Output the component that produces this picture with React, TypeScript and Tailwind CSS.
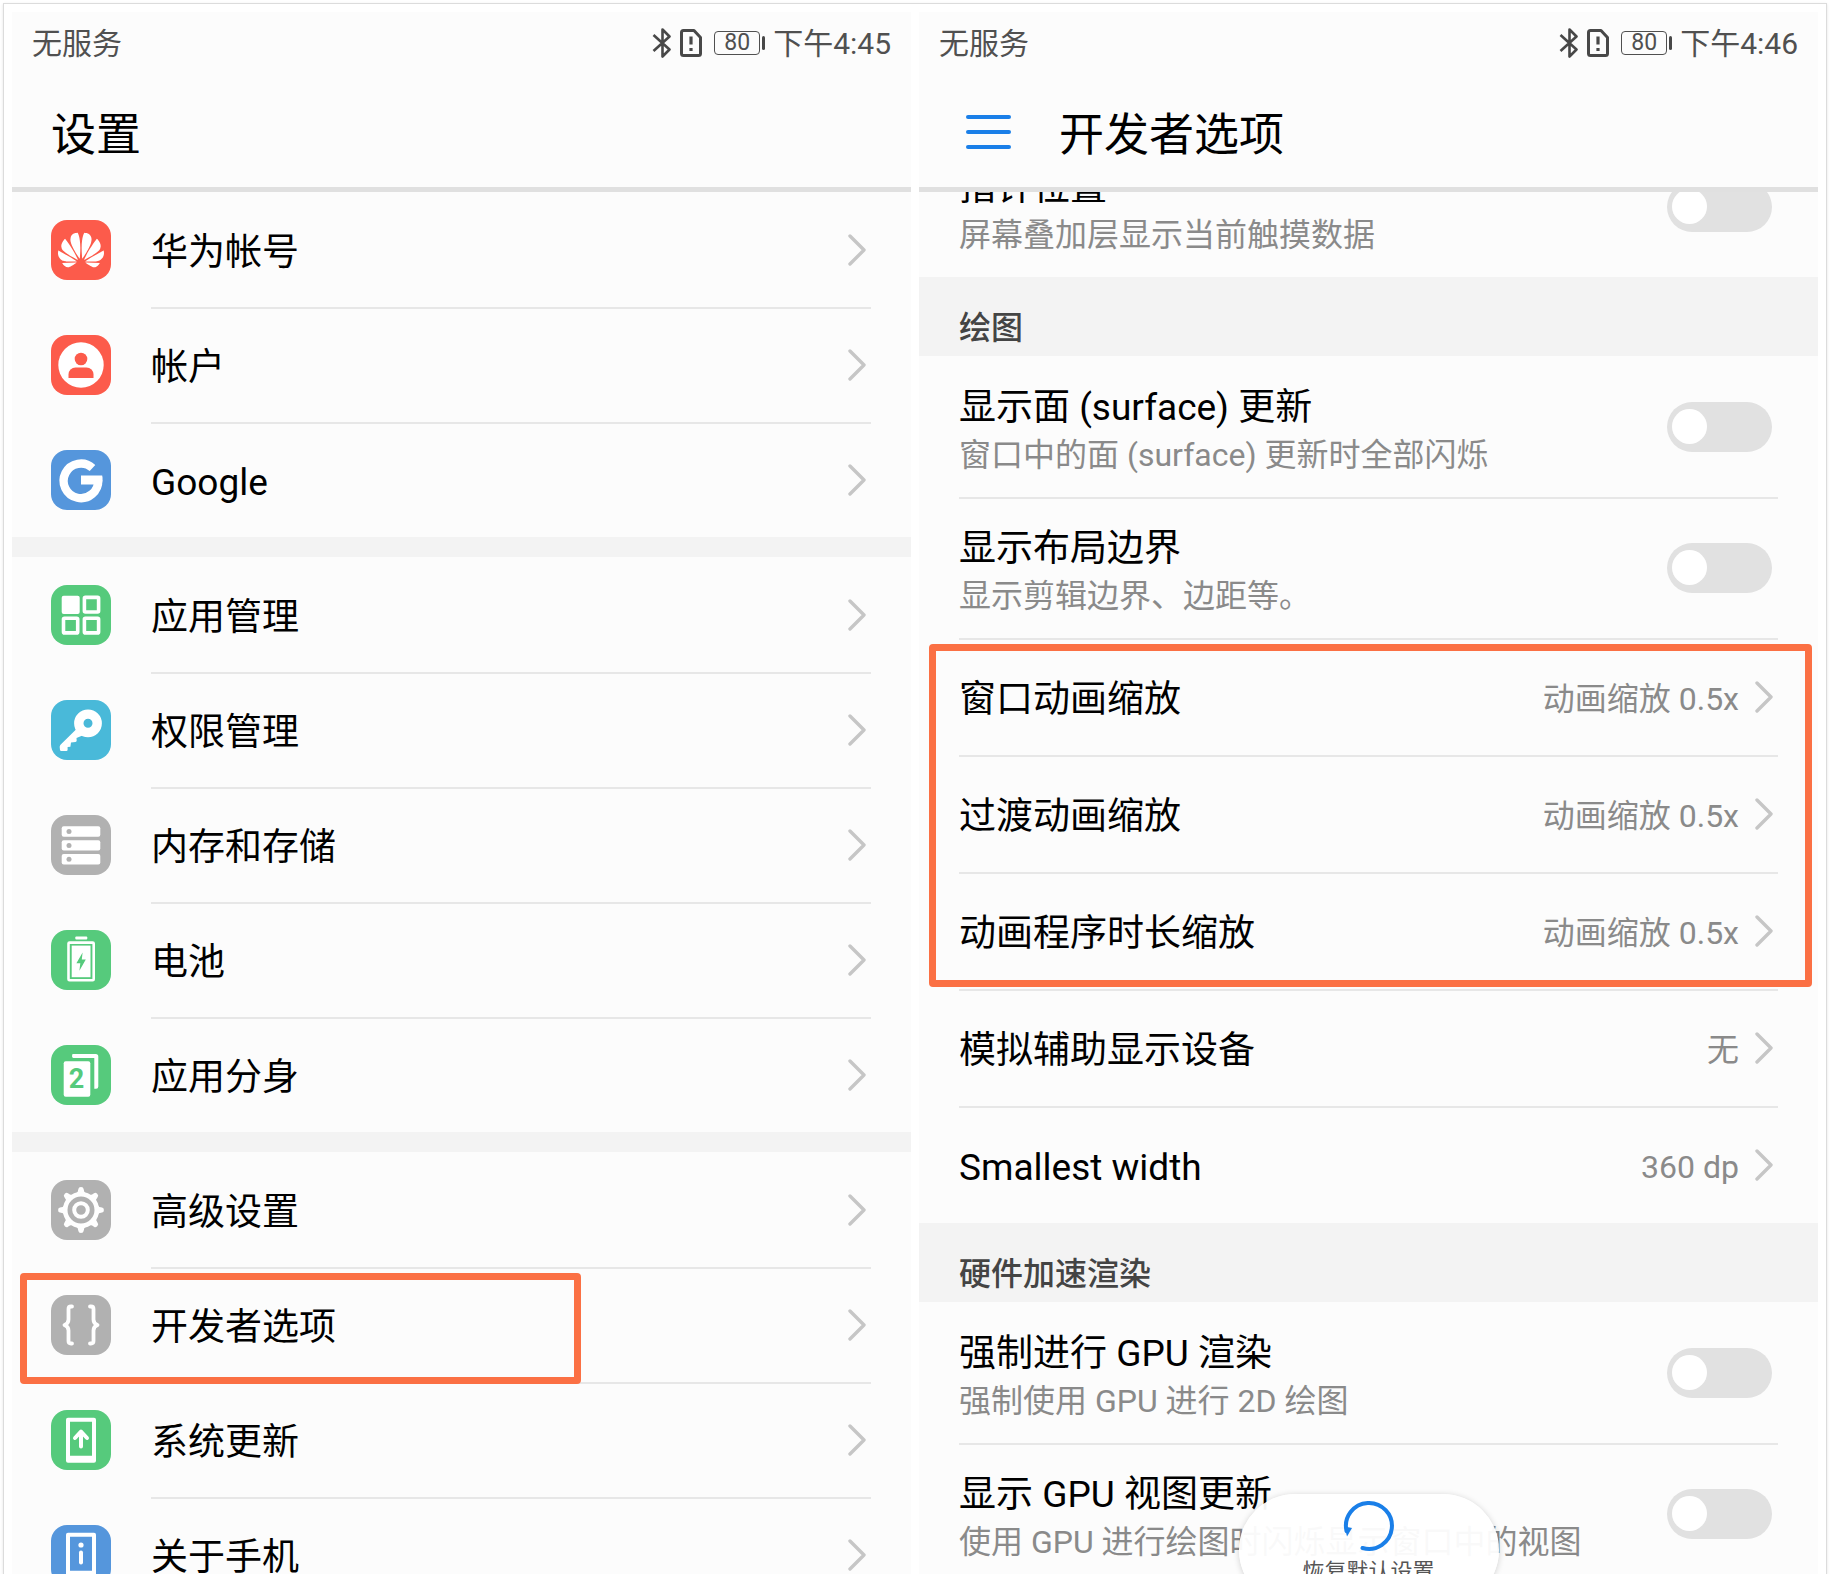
import { ReactNode } from 'react';
import { SiHuawei } from 'react-icons/si';

type Entry = { label: string; icon: ReactNode; marked?: boolean };

function Tile({ className, children }: { className: string; children: ReactNode }) {
  return (
    <span className={`size-[60px] shrink-0 overflow-hidden rounded-2xl text-white ${className}`}>
      <svg viewBox="0 0 60 60" className="size-full" fill="currentColor" aria-hidden="true">
        {children}
      </svg>
    </span>
  );
}

const red = 'bg-[#fc5b4b]';
const blue = 'bg-[#5596dc]';
const green = 'bg-[#56ca7c]';
const cyan = 'bg-[#49b9d9]';
const gray = 'bg-[#b1b1b1]';

const accountEntries: Entry[] = [
  {
    label: '华为帐号',
    icon: (
      <Tile className={red}>
        <SiHuawei x="7" y="7" size={46} />
      </Tile>
    ),
  },
  {
    label: '帐户',
    icon: (
      <Tile className={red}>
        <circle cx="30" cy="30" r="22.7" />
        <circle cx="30" cy="24" r="6.3" fill="#fc5b4b" />
        <path d="M17.5 43v-3.5a7 7 0 0 1 7-7h11a7 7 0 0 1 7 7V43Z" fill="#fc5b4b" />
      </Tile>
    ),
  },
  {
    label: 'Google',
    icon: (
      <Tile className={blue}>
        <path d="M41.5 18A17.3 17.3 0 1 0 47.2 30" fill="none" stroke="currentColor" strokeWidth="8.4" />
        <path d="M30 25.6h21.2q.5 2.2.3 4.4l-.6 4.6H30Z" />
      </Tile>
    ),
  },
];

const systemEntries: Entry[] = [
  {
    label: '应用管理',
    icon: (
      <Tile className={green}>
        <rect x="10.7" y="10.7" width="18" height="18.3" rx="2" />
        <g fill="none" stroke="currentColor" strokeWidth="3.6">
          <rect x="33.4" y="12.4" width="14.2" height="14.6" rx="1" />
          <rect x="12.5" y="33.3" width="14.2" height="14.6" rx="1" />
          <rect x="33.4" y="33.3" width="14.2" height="14.6" rx="1" />
        </g>
      </Tile>
    ),
  },
  {
    label: '权限管理',
    icon: (
      <Tile className={cyan}>
        <circle cx="37" cy="23.3" r="9.2" fill="none" stroke="currentColor" strokeWidth="9.4" />
        <path d="M25 29.5 9.5 44.8q-1 1-.8 2.5l.3 2.6q.2 1 1.2 1h5.2q1.2 0 1.2-1.2v-2.6l2.8-.4.6-4.2 4.4-.4q1.4-.2 1.3-1.6l-.2-2.6L31.5 35.5Z" />
      </Tile>
    ),
  },
  {
    label: '内存和存储',
    icon: (
      <Tile className={gray}>
        <rect x="10.7" y="11.3" width="38.6" height="10.4" rx="2" />
        <rect x="10.7" y="25.2" width="38.6" height="10.4" rx="2" />
        <rect x="10.7" y="39" width="38.6" height="10.4" rx="2" />
        <g fill="#b1b1b1">
          <circle cx="18" cy="16.5" r="2.5" />
          <circle cx="18" cy="30.4" r="2.5" />
          <circle cx="18" cy="44.2" r="2.5" />
        </g>
      </Tile>
    ),
  },
  {
    label: '电池',
    icon: (
      <Tile className={green}>
        <rect x="24.3" y="6.5" width="12" height="3" rx="1" />
        <rect x="17.5" y="12.6" width="25.2" height="37.6" rx="1" fill="none" stroke="currentColor" strokeWidth="2.6" />
        <rect x="20.7" y="15.6" width="18.8" height="31.6" />
        <path d="M31.6 22.6 25.4 33.3h3.9l-.9 7.4 6.4-11.2h-4Z" fill="#56ca7c" />
      </Tile>
    ),
  },
  {
    label: '应用分身',
    icon: (
      <Tile className={green}>
        <path d="M21.5 9h23.3q2.5 0 2.5 2.5v30q0 2.200-2.2 2.200h-1.8V13H22.5q-1.5 0-1.5-2Z" />
        <rect x="12.7" y="16.3" width="26.6" height="35.4" rx="2" />
        <text x="25.6" y="43" textAnchor="middle" fill="#56ca7c" className="font-[Roboto,sans-serif] text-[27px] font-bold">
          2
        </text>
      </Tile>
    ),
  },
];

const gearTeeth = [0, 45, 90, 135, 180, 225, 270, 315];

const advancedEntries: Entry[] = [
  {
    label: '高级设置',
    icon: (
      <Tile className={gray}>
        <circle cx="30" cy="30" r="15.8" fill="none" stroke="currentColor" strokeWidth="4.6" />
        <circle cx="30" cy="30" r="6.8" fill="none" stroke="currentColor" strokeWidth="4" />
        {gearTeeth.map((deg) => (
          <path key={deg} d="M24.5 14q2.8-1.5 2.9-5 .1-1.900 2.600-1.900t2.600 1.900q.1 3.500 2.900 5Z" transform={`rotate(${deg} 30 30)`} />
        ))}
      </Tile>
    ),
  },
  {
    label: '开发者选项',
    marked: true,
    icon: (
      <Tile className={gray}>
        <g fill="none" stroke="currentColor" strokeWidth="3.8" strokeLinecap="round" strokeLinejoin="round">
          <path d="M21 11.500h-1q-2.500 0-2.500 2.500v10.500q0 4-4 5.500 4 1.500 4 5.500V46q0 2.500 2.500 2.500h1" />
          <path d="M39 11.500h1q2.500 0 2.500 2.500v10.500q0 4 4 5.500-4 1.500-4 5.500V46q0 2.500-2.500 2.500h-1" />
        </g>
      </Tile>
    ),
  },
  {
    label: '系统更新',
    icon: (
      <Tile className={green}>
        <path fillRule="evenodd" d="M17 7.7h26q2 0 2 2v41q0 2-2 2H17q-2 0-2-2v-41q0-2 2-2Zm2 4v34h22v-34Z" />
        <path d="M30 36.5V22m-6 6 6-6.5 6 6.5" fill="none" stroke="currentColor" strokeWidth="4" strokeLinecap="round" strokeLinejoin="round" />
      </Tile>
    ),
  },
  {
    label: '关于手机',
    icon: (
      <Tile className={blue}>
        <path fillRule="evenodd" d="M17 7.7h26q2 0 2 2v41q0 2-2 2H17q-2 0-2-2v-41q0-2 2-2Zm2 4v34h22v-34Z" />
        <circle cx="30" cy="20" r="2.6" />
        <path d="M30 27.5v10" stroke="currentColor" strokeWidth="4" strokeLinecap="round" />
      </Tile>
    ),
  },
];

const scaleOptions = ['窗口动画缩放', '过渡动画缩放', '动画程序时长缩放'];

const markClass = 'pointer-events-none absolute rounded-sm border-[7px] border-[#fb7044]';
const dividerClass = 'shadow-[inset_0_2px_#e7e7e7]';

function Chevron() {
  return (
    <svg viewBox="0 0 18 32" className="mr-[5px] h-8 w-[18px] shrink-0" fill="none" stroke="#c6c6c6" strokeWidth="3.4" strokeLinecap="round" strokeLinejoin="round" aria-hidden="true">
      <path d="M2 2l14 14L2 30" />
    </svg>
  );
}

function StatusBar({ time }: { time: string }) {
  return (
    <div className="flex h-[62px] items-center pr-5 pl-5 text-[30px] leading-[62px] text-[#505050]">
      <span className="pt-0.5">无服务</span>
      <svg viewBox="0 0 20 30" className="mr-2 ml-auto h-[30px] w-5" fill="none" stroke="#484848" strokeWidth="2.6" strokeLinejoin="round" aria-hidden="true">
        <path d="M1.5 7 17.5 21.5 10.5 28.5V1.5L17.5 8.5 1.5 23" />
      </svg>
      <svg viewBox="0 0 22 28" className="mr-3 h-7 w-[22px]" fill="none" stroke="#484848" aria-hidden="true">
        <path d="M3.5 1.5H14L20.5 8.5V24.500q0 2-2 2h-15q-2 0-2-2v-21q0-2 2-2Z" strokeWidth="3" strokeLinejoin="round" />
        <path d="M11 7.5v8m0 3.500v3" strokeWidth="3.200" />
      </svg>
      <span className="flex h-6 w-[46px] items-center justify-center rounded-[4px] border border-[#505050] text-[23px] leading-6">80</span>
      <span className="mr-2 ml-0.5 h-3.5 w-[3px] rounded-full bg-[#484848]" />
      <time className="pt-0.5">{time}</time>
    </div>
  );
}

function SettingsGroup({ entries }: { entries: Entry[] }) {
  return (
    <ul>
      {entries.map((entry, i) => (
        <li key={entry.label} className="relative">
          <a href="#" className="flex h-[115px] items-center gap-10 pr-10 pl-[39px]">
            {entry.icon}
            <span className={`flex flex-1 items-center justify-between self-stretch ${i > 0 ? dividerClass : ''}`}>
              <span className="pt-1.5">{entry.label}</span>
              <Chevron />
            </span>
          </a>
          {entry.marked && <span className={`${markClass} top-1.5 -bottom-0.5 left-2 z-10 w-[561px]`} />}
        </li>
      ))}
    </ul>
  );
}

function SectionTitle({ children }: { children: ReactNode }) {
  return <h2 className="h-[79px] bg-[#f3f3f3] px-10 pt-6 text-[32px] leading-[54px] font-medium text-[#444]">{children}</h2>;
}

function ToggleRow({ title, note, divided }: { title: string; note: string; divided?: boolean }) {
  return (
    <label className="flex h-[141px] px-10">
      <span className={`flex flex-1 items-center justify-between ${divided ? dividerClass : ''}`}>
        <span className="pt-1.5">
          <span className="block leading-[50px]">{title}</span>
          <span className="block text-[32px] leading-[44px] text-[#8a8a8a]">{note}</span>
        </span>
        <input
          type="checkbox"
          role="switch"
          className="mr-1.5 flex h-[50px] w-[105px] shrink-0 appearance-none items-center rounded-full bg-[#e1e1e1] px-[5px] before:size-[35px] before:rounded-full before:bg-white checked:justify-end checked:bg-[#1a7fe8]"
        />
      </span>
    </label>
  );
}

function ValueRow({ title, value }: { title: string; value: string }) {
  return (
    <a href="#" className="flex h-[117px] px-10">
      <span className={`flex flex-1 items-center ${dividerClass}`}>
        <span className="pt-1.5">{title}</span>
        <span className="mr-4 ml-auto pt-1 text-[32px] text-[#8a8a8a]">{value}</span>
        <Chevron />
      </span>
    </a>
  );
}

export default function App() {
  return (
    <div className="h-screen overflow-hidden bg-white px-[3px] pt-[3px] font-[Roboto,'Noto_Sans_CJK_SC',sans-serif] text-[37px] leading-[50px] text-black">
      <div className="flex h-full gap-2 border border-b-0 border-[#dcdcdc] bg-white px-2 pt-2 shadow-sm">
        <main className="flex-1 overflow-hidden bg-[#fcfcfc]">
          <StatusBar time="下午4:45" />
          <header className="flex h-[118px] items-center border-b-[5px] border-[#e0e0e0] px-[39px] pt-0.5">
            <h1 className="pt-2 text-[45px]">设置</h1>
          </header>
          <SettingsGroup entries={accountEntries} />
          <div className="h-5 bg-[#f3f3f3]" />
          <SettingsGroup entries={systemEntries} />
          <div className="h-5 bg-[#f3f3f3]" />
          <SettingsGroup entries={advancedEntries} />
        </main>

        <section className="relative flex-1 overflow-hidden bg-[#fcfcfc]">
          <StatusBar time="下午4:46" />
          <header className="flex h-[118px] items-center border-b-[5px] border-[#e0e0e0] px-[47px] pt-0.5">
            <button type="button" aria-label="菜单" className="mr-12 flex w-[45px] flex-col gap-[11px]">
              <span className="h-1 rounded-full bg-[#1a7fe8]" />
              <span className="h-1 rounded-full bg-[#1a7fe8]" />
              <span className="h-1 rounded-full bg-[#1a7fe8]" />
            </button>
            <h1 className="pt-2 text-[45px]">开发者选项</h1>
          </header>
          <div className="overflow-hidden">
            {/* scrolled a little way under the header */}
            <div className="-mt-14">
              <ToggleRow title="指针位置" note="屏幕叠加层显示当前触摸数据" />
            </div>
            <SectionTitle>绘图</SectionTitle>
            <ToggleRow title="显示面 (surface) 更新" note="窗口中的面 (surface) 更新时全部闪烁" />
            <ToggleRow title="显示布局边界" note="显示剪辑边界、边距等。" divided />
            <div className="relative">
              {scaleOptions.map((title) => (
                <ValueRow key={title} title={title} value="动画缩放 0.5x" />
              ))}
              <span className={`${markClass} top-1.5 right-1.5 bottom-0.5 left-2.5`} />
            </div>
            <ValueRow title="模拟辅助显示设备" value="无" />
            <ValueRow title="Smallest width" value="360 dp" />
            <SectionTitle>硬件加速渲染</SectionTitle>
            <ToggleRow title="强制进行 GPU 渲染" note="强制使用 GPU 进行 2D 绘图" />
            <ToggleRow title="显示 GPU 视图更新" note="使用 GPU 进行绘图时闪烁显示窗口中的视图" divided />
          </div>
          <button
            type="button"
            className="absolute -bottom-8 left-1/2 flex h-28 w-[260px] -translate-x-1/2 flex-col items-center rounded-full bg-white/95 pt-1.5 text-[22px] leading-8 text-[#555] shadow-[0_1px_6px_rgba(0,0,0,0.18)]"
          >
            <svg viewBox="0 0 52 52" className="size-[52px]" aria-hidden="true">
              <path d="M3.5 31A23 23 0 1 1 19.5 48" fill="none" stroke="#1a7fe8" strokeWidth="4" strokeLinecap="round" />
              <path d="M1.5 26.5 9 28 4 36.5Z" fill="#1a7fe8" />
            </svg>
            <span className="mt-1">恢复默认设置</span>
          </button>
        </section>
      </div>
    </div>
  );
}
